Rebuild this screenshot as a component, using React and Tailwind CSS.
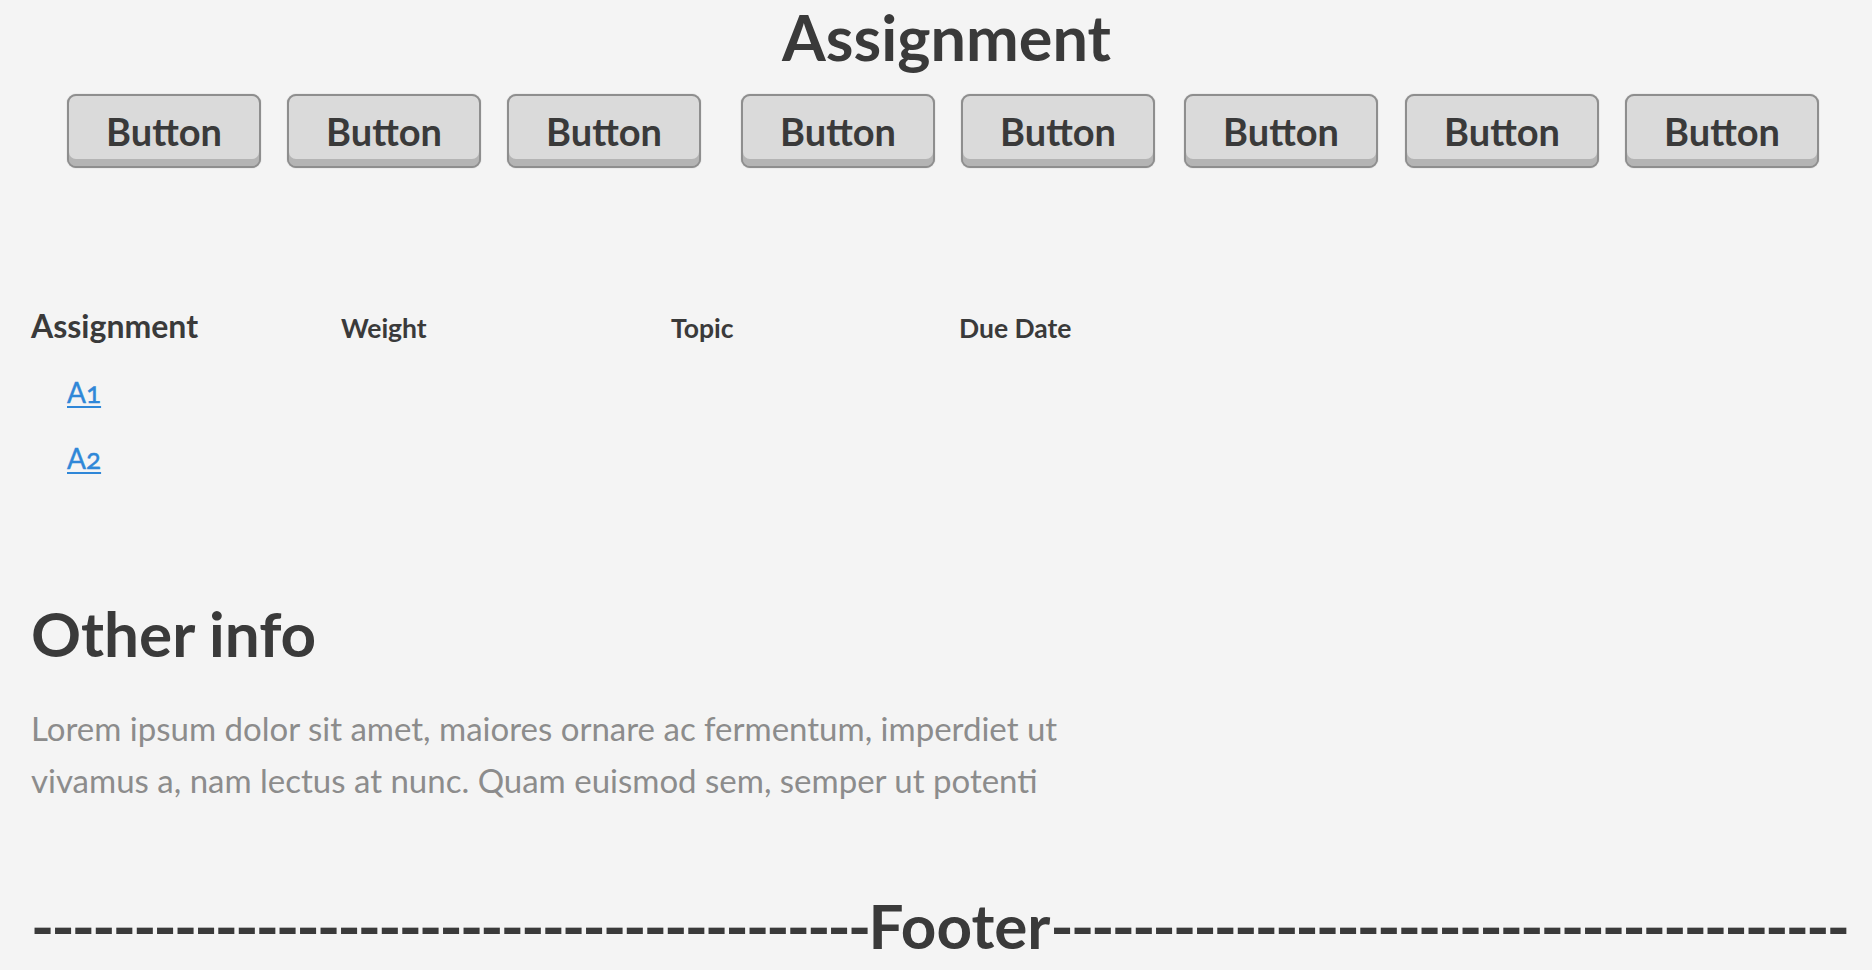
import React from "react";

const buttons = [
  { id: 1, extra: "" },
  { id: 2, extra: "" },
  { id: 3, extra: "" },
  { id: 4, extra: "ml-[14px]" },
  { id: 5, extra: "" },
  { id: 6, extra: "ml-[3px]" },
  { id: 7, extra: "ml-[1px]" },
  { id: 8, extra: "" },
];

const WireButton = ({ className }) => (
  <button
    className={`flex h-[74px] w-[194px] items-center justify-center rounded-[9px] border-2 border-[#8e8e8e] bg-[#dadada] text-[38px] font-bold leading-[38px] text-[#3a3a3a] shadow-[inset_0_-7px_0_#b4b4b4,0_0_1px_#9a9a9a] ${className}`}
  >
    Button
  </button>
);

const App = () => {
  return (
    <div className="min-h-screen overflow-hidden bg-[#f4f4f4] font-['Lato',sans-serif] text-[#3a3a3a]">
      <h1 className="pt-[5px] pl-[21px] text-center text-[63px] font-bold leading-[63px]">
        Assignment
      </h1>

      <div className="mt-[26px] flex gap-[26px] pl-[67px]">
        {buttons.map((b) => (
          <WireButton key={b.id} className={b.extra} />
        ))}
      </div>

      <div className="mt-[142px] grid grid-cols-[310px_330px_288px_auto] items-baseline pl-[31px]">
        <span className="text-[32px] font-bold leading-[31px]">Assignment</span>
        <span className="text-[26.5px] font-bold leading-[26px]">Weight</span>
        <span className="text-[26.5px] font-bold leading-[26px]">Topic</span>
        <span className="text-[26.5px] font-bold leading-[26px]">Due Date</span>
      </div>

      <div className="mt-[18px] pl-[67px]">
        <div className="text-[28px] leading-[66px]">
          <a href="#" className="text-[#2f87d8] underline decoration-2 underline-offset-[3px] oldstyle-nums [-webkit-text-stroke:0.4px_#2f87d8]">
            A1
          </a>
        </div>
        <div className="text-[28px] leading-[66px]">
          <a href="#" className="text-[#2f87d8] underline decoration-2 underline-offset-[3px] oldstyle-nums [-webkit-text-stroke:0.4px_#2f87d8]">
            A2
          </a>
        </div>
      </div>

      <section className="mt-[112px] pl-[31px]">
        <h2 className="text-[62px] font-bold leading-[61px]">Other info</h2>
        <p className="mt-[38px] text-[33px] leading-[52px] text-[#8c8c8c]">
          Lorem ipsum dolor sit amet, maiores ornare ac fermentum, imperdiet ut
          <br />
          vivamus a, nam lectus at nunc. Quam euismod sem, semper ut potenti
        </p>
      </section>

      <footer className="mt-[89px] flex items-baseline whitespace-nowrap pl-[31px] text-[62px] font-bold leading-[60px]">
        <span className="tracking-[-2.7px]">-----------------------------------------</span>
        <span>Footer</span>
        <span className="tracking-[-2.7px]">---------------------------------------</span>
      </footer>
    </div>
  );
};

export default App;
